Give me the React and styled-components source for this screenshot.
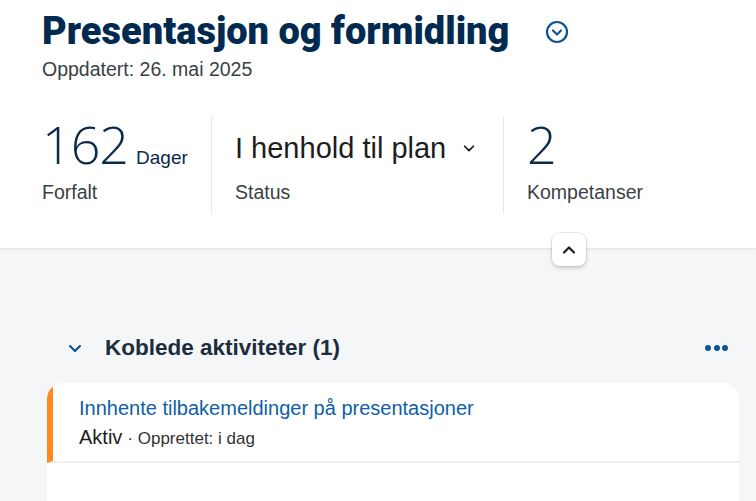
import React from "react";
import styled, { createGlobalStyle } from "styled-components";

const GlobalStyle = createGlobalStyle`
  html, body {
    margin: 0;
    padding: 0;
    background: #f5f6f7;
    font-family: "Liberation Sans", Arial, sans-serif;
  }
`;

const Page = styled.div`
  width: 756px;
  height: 501px;
  overflow: hidden;
  background: #f5f6f7;
`;

const Header = styled.header`
  position: relative;
  background: #fff;
  height: 249px;
  box-sizing: border-box;
  padding: 9px 0 0 42px;
  border-bottom: 1px solid #e8e8e8;
  box-shadow: 0 1px 2px rgba(0, 0, 0, 0.04);
`;

const TitleRow = styled.div`
  display: flex;
  align-items: center;
  gap: 35px;
`;

const Title = styled.h1`
  margin: 0;
  font-family: Roboto, "Liberation Sans", sans-serif;
  font-weight: 900;
  font-size: 38px;
  line-height: 44px;
  color: #002a50;
`;

const CircleBtn = styled.button`
  width: 26px;
  height: 26px;
  padding: 0;
  border: none;
  background: none;
  display: flex;
  align-items: center;
  justify-content: center;
  margin-top: 2px;
`;

const Updated = styled.div`
  margin-top: 5px;
  font-size: 19.5px;
  color: #3a3f45;
`;

const Kpis = styled.div`
  display: flex;
  margin-top: 35px;
  height: 98px;
`;

const Kpi = styled.div`
  display: flex;
  flex-direction: column;
  width: ${(p) => p.$w}px;
  box-sizing: border-box;
  padding-left: ${(p) => (p.$first ? 0 : 23)}px;
  border-left: ${(p) => (p.$first ? "none" : "1px solid #e8e8e8")};
`;

const ValueRow = styled.div`
  display: flex;
  align-items: baseline;
  height: 60px;
`;

const BigNumber = styled.span`
  font-family: "Open Sans", "Liberation Sans", sans-serif;
  font-weight: 300;
  font-size: 52px;
  line-height: 56px;
  color: #0b2a4a;
  letter-spacing: -1px;
`;

const Unit = styled.span`
  margin-left: 8px;
  font-size: 19px;
  color: #0b2a4a;
`;

const StatusValue = styled.button`
  display: flex;
  align-items: center;
  gap: 16px;
  border: none;
  background: none;
  padding: 0;
  margin-top: 16px;
  height: 32px;
  font-family: inherit;
  font-size: 29px;
  color: #1d1d1d;
`;

const KpiLabel = styled.div`
  font-size: 19.5px;
  color: #3a3f45;
  margin-top: 5px;
`;

const CollapseBtn = styled.button`
  position: absolute;
  left: 552px;
  top: 233px;
  width: 34px;
  height: 33px;
  border: none;
  border-radius: 8px;
  background: #fff;
  box-shadow: 0 0 0 1px rgba(0, 0, 0, 0.06), 0 2px 4px rgba(0, 0, 0, 0.18);
  display: flex;
  align-items: center;
  justify-content: center;
  padding: 0;
`;

const Section = styled.section`
  padding: 83px 17px 0 47px;
`;

const SectionHead = styled.div`
  display: flex;
  align-items: center;
  height: 32px;
  padding-left: 20px;
`;

const SectionTitle = styled.h2`
  margin: 0 0 0 22px;
  flex: 1;
  font-size: 22.5px;
  font-weight: 700;
  color: #1d2d3e;
`;

const Dots = styled.div`
  display: flex;
  gap: 2.5px;
  margin-right: 11px;
  span {
    width: 6px;
    height: 6px;
    border-radius: 50%;
    background: #0a5592;
  }
`;

const Card = styled.div`
  margin-top: 19px;
  background: #fff;
  border-radius: 16px 16px 0 0;
  overflow: hidden;
  height: 200px;
`;

const Item = styled.div`
  border-left: 6px solid #ff8b1f;
  padding: 13px 0 0 26px;
  height: 80px;
  box-sizing: border-box;
  border-bottom: 2px solid #eeeff1;
`;

const ItemTitle = styled.a`
  display: block;
  font-size: 20px;
  color: #0e60a5;
  text-decoration: none;
  line-height: 24px;
`;

const Meta = styled.div`
  margin-top: 6px;
  display: flex;
  align-items: baseline;
  color: #1d1d1d;
`;

const Status = styled.span`
  font-size: 20px;
`;

const Created = styled.span`
  font-size: 17px;
  color: #333;
  margin-left: 5px;
`;

const Chevron = ({ dir = "down", size = 14, color = "#0a4f8a", width = 2 }) => (
  <svg width={size} height={size} viewBox="0 0 16 16" fill="none">
    <path
      d={dir === "down" ? "M3 6l5 5 5-5" : "M3 10.5l5-5 5 5"}
      stroke={color}
      strokeWidth={width}
      strokeLinecap="round"
      strokeLinejoin="round"
    />
  </svg>
);

export default function App() {
  return (
    <Page>
      <GlobalStyle />
      <Header>
        <TitleRow>
          <Title>Presentasjon og formidling</Title>
          <CircleBtn aria-label="Vis mer">
            <svg width="24" height="24" viewBox="0 0 24 24" fill="none">
              <circle cx="12" cy="12" r="10" stroke="#0a5592" strokeWidth="2.2" />
              <path d="M8 10.5l4 4 4-4" stroke="#0a5592" strokeWidth="2.2" strokeLinecap="round" strokeLinejoin="round" />
            </svg>
          </CircleBtn>
        </TitleRow>
        <Updated>Oppdatert: 26. mai 2025</Updated>
        <Kpis>
          <Kpi $first $w={169}>
            <ValueRow>
              <BigNumber>162</BigNumber>
              <Unit>Dager</Unit>
            </ValueRow>
            <KpiLabel>Forfalt</KpiLabel>
          </Kpi>
          <Kpi $w={292}>
            <ValueRow>
              <StatusValue>
                I henhold til plan
                <Chevron size={14} color="#1d1d1d" />
              </StatusValue>
            </ValueRow>
            <KpiLabel>Status</KpiLabel>
          </Kpi>
          <Kpi $w={200}>
            <ValueRow>
              <BigNumber>2</BigNumber>
            </ValueRow>
            <KpiLabel>Kompetanser</KpiLabel>
          </Kpi>
        </Kpis>
        <CollapseBtn aria-label="Skjul">
          <Chevron dir="up" size={16} color="#1d1d1d" width={2.2} />
        </CollapseBtn>
      </Header>
      <Section>
        <SectionHead>
          <Chevron size={16} color="#0a4f8a" width={2} />
          <SectionTitle>Koblede aktiviteter (1)</SectionTitle>
          <Dots>
            <span />
            <span />
            <span />
          </Dots>
        </SectionHead>
        <Card>
          <Item>
            <ItemTitle href="#">Innhente tilbakemeldinger på presentasjoner</ItemTitle>
            <Meta>
              <Status>Aktiv</Status>
              <Created>· Opprettet: i dag</Created>
            </Meta>
          </Item>
        </Card>
      </Section>
    </Page>
  );
}
